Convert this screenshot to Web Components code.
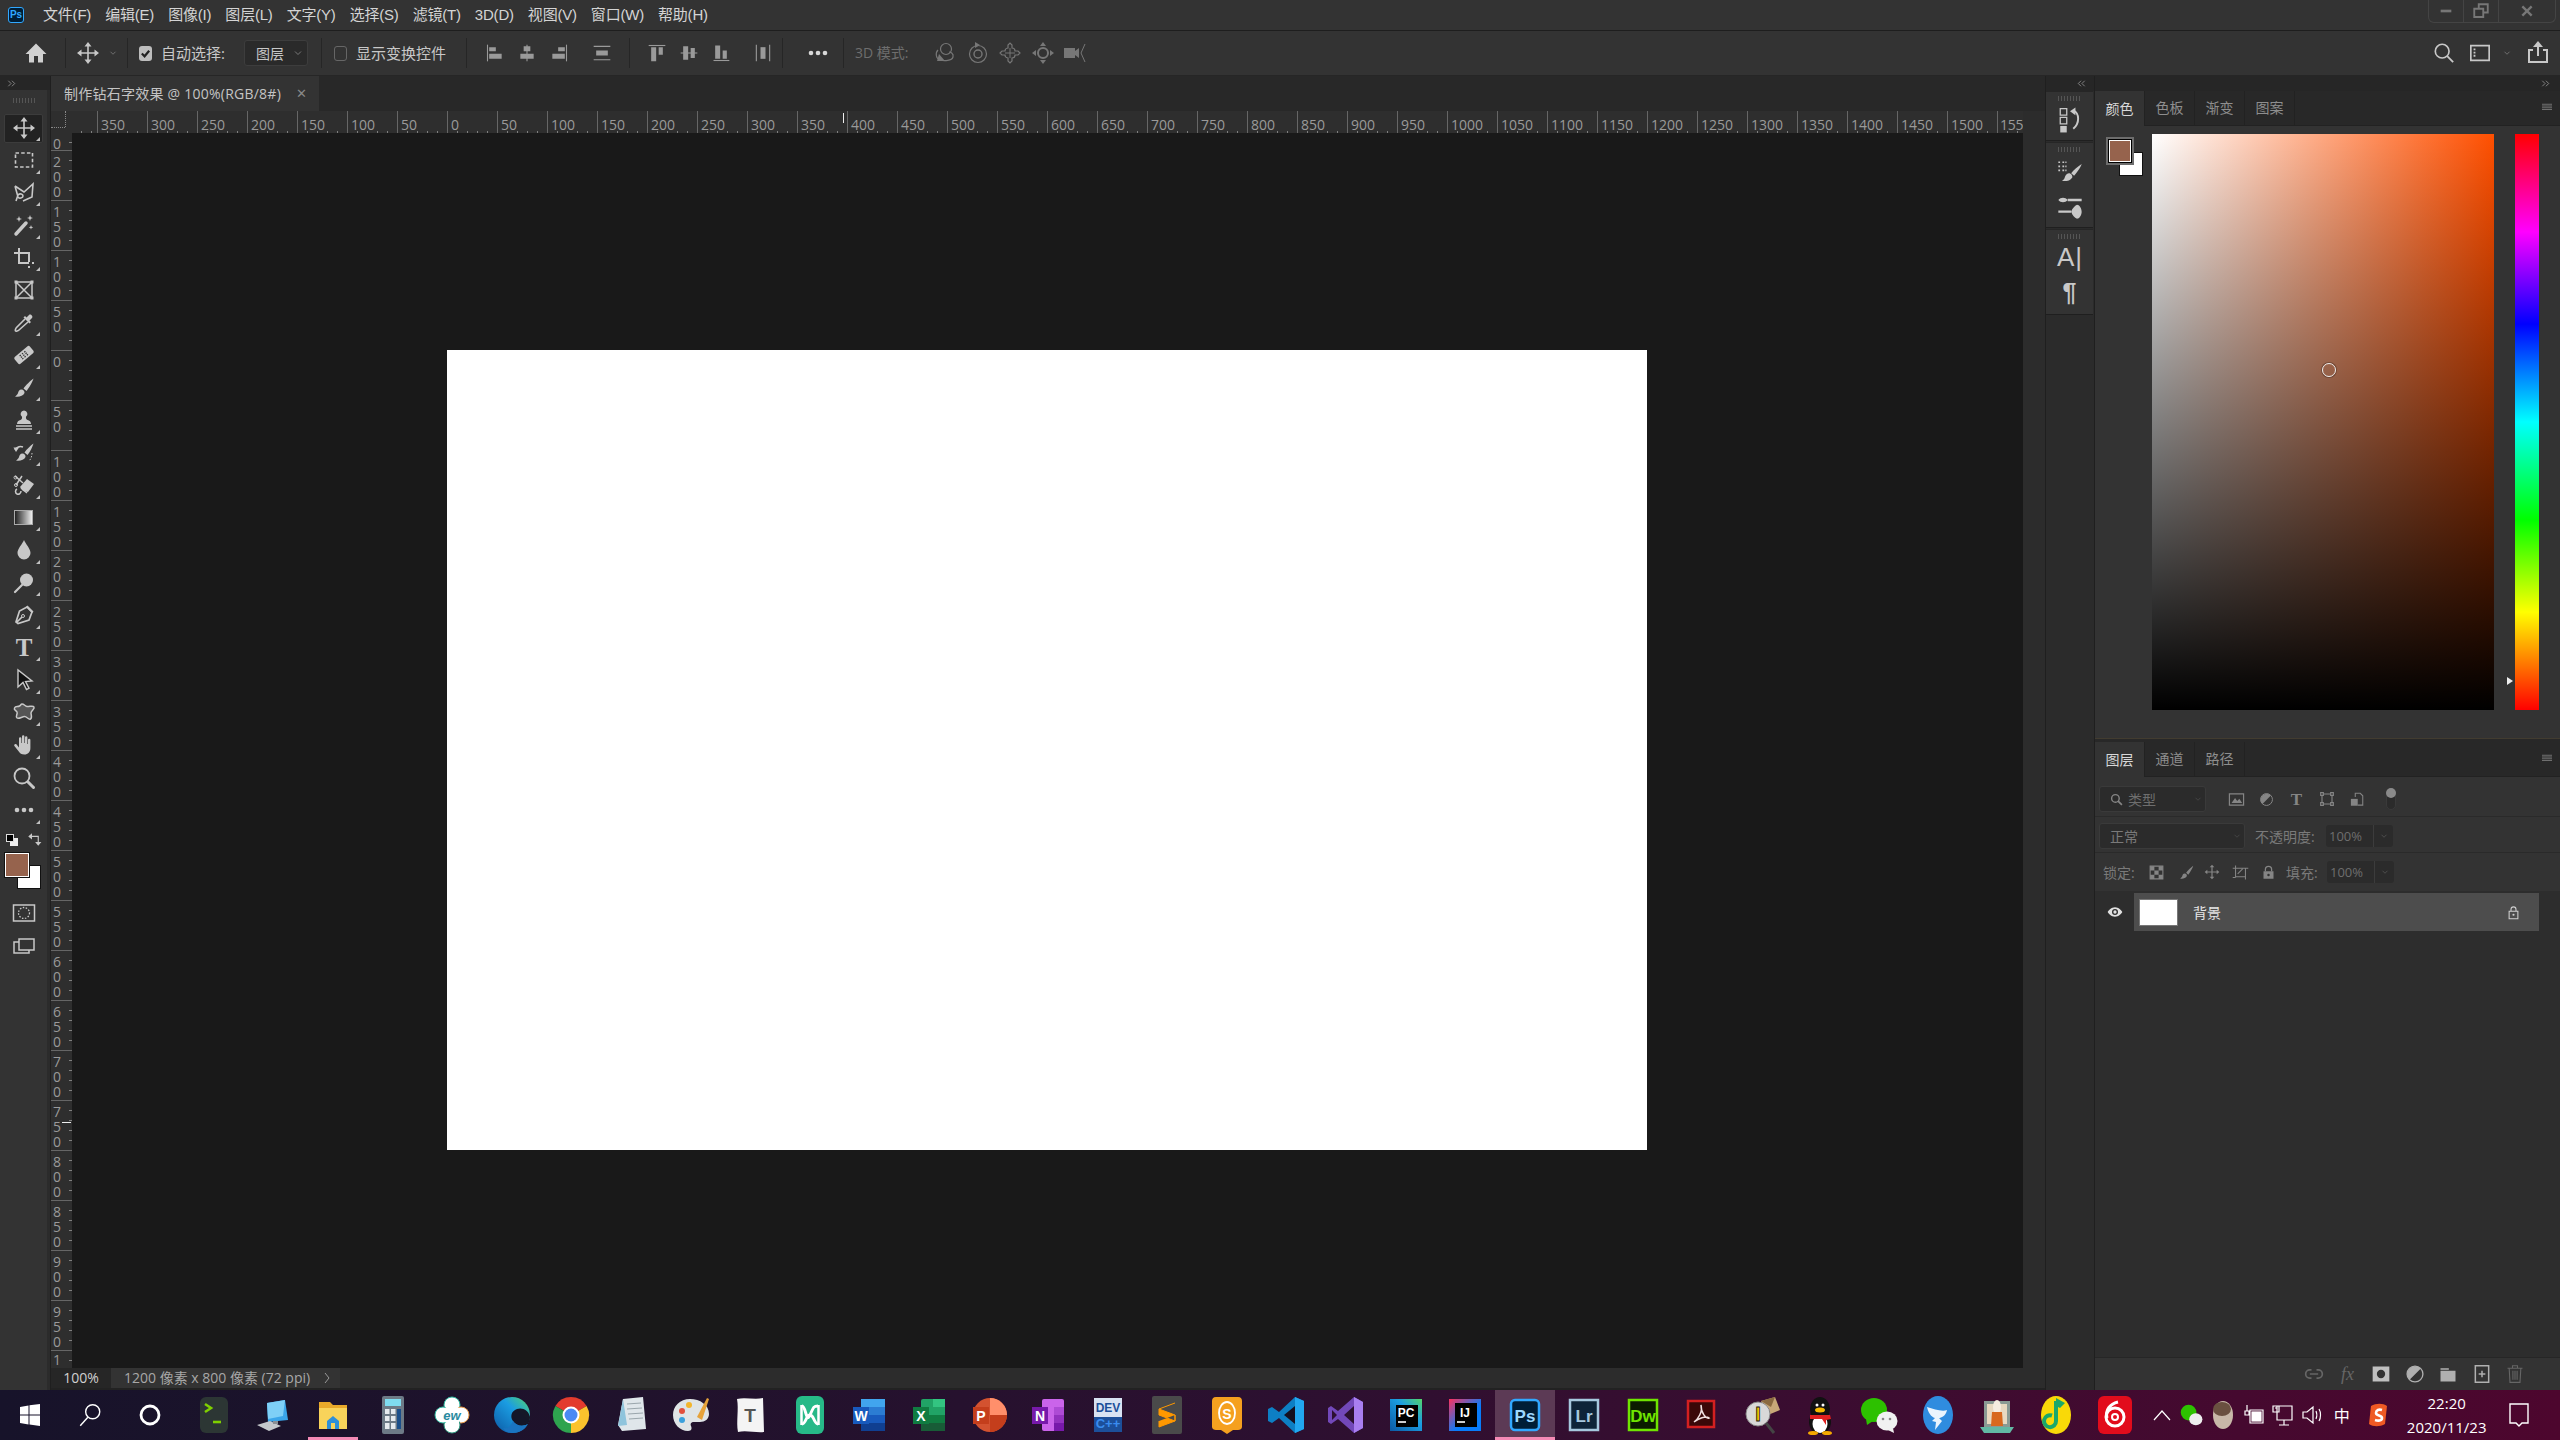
<!DOCTYPE html>
<html lang="zh-CN">
<head>
<meta charset="utf-8">
<title>Photoshop</title>
<style>
    html, body { margin: 0; padding: 0; background: #191919; }
    body { width: 2560px; height: 1440px; overflow: hidden; font-family: "Open Sans", "Noto Sans CJK SC", sans-serif; }
</style>
</head>
<body>
<ps-app></ps-app>
<script>
// icon shapes on a 24 box, drawn with currentColor
const F = 'fill="currentColor" stroke="none"';
const ICONS = {
    home: `<path ${F} d="M12 2.500 1.500 13H5v8.500h5V15h4v6.500h5V13h3.500z"/>`,
    move: `<path d="M12 4v16M4 12h16" stroke-width="1.600"/><path ${F} d="M12 1l3.500 4.500h-7zM12 23l-3.500-4.500h7zM1 12l4.500-3.500v7zM23 12l-4.500 3.500v-7z"/>`,
    marquee: `<rect x="3.500" y="5" width="17" height="14" stroke-width="1.600" stroke-dasharray="3.500 2.200"/>`,
    lasso: `<path stroke-width="1.600" d="M3 5l9 6 9-8-1 13-9 4M3 5l3 11c1 2 5 1 5-1s-3-3-5-1l-2 6"/>`,
    wand: `<path stroke-width="3.500" stroke-linecap="round" d="M4 21 14 10"/><path ${F} d="M7 3l.8 2.200L10 6l-2.200.8L7 9l-.8-2.200L4 6l2.200-.8zM18 2l.8 2.200L21 5l-2.200.8L18 8l-.8-2.200L15 5l2.200-.8zM19 12l.6 1.700 1.700.6-1.700.6-.6 1.700-.6-1.700-1.700-.6 1.700-.6z"/>`,
    crop: `<path stroke-width="2" d="M7 2v15h10M2 7h15v9M17 20v2M20 17h2"/>`,
    frame: `<path stroke-width="1.500" d="M4 4h16v16H4zM4 4l16 16M20 4 4 20"/><path ${F} d="M2.500 2.500h3v3h-3zM18.500 2.500h3v3h-3zM2.500 18.500h3v3h-3zM18.500 18.500h3v3h-3z"/>`,
    dropper: `<path stroke-width="1.600" d="M13 8 4.500 16.500c-1 1-1.500 3-1 3.500s2.500 0 3.500-1L16 11"/><path ${F} d="M11.500 6.500l6 6 1.500-1.500-1.500-1.500 2.500-2.500c1.500-1.500-1.500-4.500-3-3L14.500 6.500 13 5z"/>`,
    bandage: `<g transform="rotate(-40 12 12)"><rect ${F} x="2" y="7.500" width="20" height="9" rx="2"/><path stroke="#333" stroke-width="1.200" stroke-dasharray="1.500 1.500" d="M8 10h8M8 12h8M8 14h8"/></g>`,
    brush: `<path ${F} d="M21.500 2.500c-3 2-8 7-10 10l3 2.500c2.500-3 6-9 7-12.500zM9.500 13.500c-2.500 0-3 2-3.500 3.500-.3 1.300-1.500 2.500-3 3.500 3.500.8 8-.2 9.500-3.500.3-1.500-1-3.500-3-3.500z"/>`,
    stamp: `<path ${F} d="M12 2.500a3.500 3.500 0 0 0-2 6.300c.3 1.700-.3 2.700-1.500 3.200-2 .8-3.500 1.500-3.500 4h14c0-2.500-1.500-3.200-3.500-4-1.200-.5-1.800-1.500-1.500-3.200a3.500 3.500 0 0 0-2-6.300z"/><path stroke-width="1.600" d="M4 18h16M4 21h16"/>`,
    history: `<path ${F} d="M21.500 2.500c-3 2-7 6-9 9l3 2.500c2.500-3 5-8 6-11.500zM10.500 12.500c-2.500 0-3 2-3.500 3.500-.3 1.300-1.500 2.500-3 3.500 3.500.8 8-.2 9.500-3.500.3-1.500-1-3.500-3-3.500z"/><path stroke-width="1.500" d="M3 9c2-3 5-4 8-3"/><path ${F} d="M1.500 6.500 7 6.500 4 11z"/><path stroke-dasharray="1.500 1.500" d="M20 12c0 3-1 6-3 8"/>`,
    eraser: `<path ${F} d="M15 6l7 5-6 8-5-1-3-4z"/><path stroke-width="1.500" d="M3 3l8 7M10 3 4 12M5 16c-2 1-2 4 0 5s4-1 4-3M9 15l6 5"/><circle cx="3.500" cy="4.500" r="1.500"/><circle cx="4" cy="12" r="1.500"/>`,
    drop: `<path ${F} d="M12 2c-1.500 4-6.500 8.500-6.500 13a6.500 6.500 0 0 0 13 0c0-4.500-5-9-6.500-13z"/>`,
    dodge: `<circle ${F} cx="14.500" cy="9" r="6.500"/><path stroke-width="2.200" stroke-linecap="round" d="M10 14 3 21"/>`,
    pen: `<path stroke-width="1.700" d="M15 4 20 9 17 17 6 20.500 4 19 7.500 8zM4 20l6-6"/><circle cx="11" cy="13" r="1.500"/><path ${F} d="M15.500 2.500 21.500 8.500 20 10 14 4z"/>`,
    pathsel: `<path fill="#111" stroke-width="1.400" d="M6 2v17l5-4.500 3.500 7 2.500-1.200-3.500-6.800 6.500-.5z"/>`,
    shape: `<path fill="#555" stroke-width="1.500" d="M10 3c2 0 3 2 5 2.500s6-1.500 7 .5-3 4-3 6 1.500 5-.5 6-3.500-2.500-6-2.500-5.500 3-7.500 1.500 1-4 0-6-3.500-2-2.500-4 3-1 5-2 1-2 2.500-2z"/>`,
    hand: `<path ${F} d="M7 11V5.500a1.200 1.200 0 0 1 2.400 0V10h.6V3.500a1.200 1.200 0 0 1 2.400 0V10h.6V4.500a1.200 1.200 0 0 1 2.400 0V11h.6V7a1.200 1.200 0 0 1 2.400 0v8c0 4-2.500 6.500-6 6.500-3 0-4.500-1-6-3.500l-4-5c-1-1.500 1-2.800 2.200-1.600L7 14.500z"/>`,
    zoom: `<circle cx="10" cy="10" r="7.500" stroke-width="1.800"/><path stroke-width="3" stroke-linecap="round" d="M16 16l5.500 5.500"/>`,
    dots: `<circle ${F} cx="5" cy="12" r="2.300"/><circle ${F} cx="12" cy="12" r="2.300"/><circle ${F} cx="19" cy="12" r="2.300"/>`,
    swap: `<path stroke-width="1.800" d="M4 7h14v11"/><path ${F} d="M8 2v10L2 7zM13 16h10l-5 6z"/>`,
    mask: `<rect x="1.500" y="4" width="21" height="16" stroke-width="1.500"/><circle cx="12" cy="12" r="5.500" stroke-dasharray="1.500 1.500" stroke-width="1.300"/>`,
    screen: `<path stroke-width="1.500" d="M7 5h15v11H7zM7 8H2v11h15v-3"/>`,
    alignL: `<path stroke-width="1.300" d="M3 2v20"/><path ${F} d="M5 5h8v5H5zM5 13h15v6H5z"/>`,
    alignC: `<path stroke-width="1.300" d="M12 2v20"/><path ${F} d="M8 4h8v6H8zM4 13h16v6H4z"/>`,
    alignR: `<path stroke-width="1.300" d="M21 2v20"/><path ${F} d="M11 5h8v5h-8zM4 13h15v6H4z"/>`,
    distH: `<path stroke-width="1.300" d="M2 4h20M2 20h20"/><path ${F} d="M5 9h14v6H5z"/>`,
    alignT: `<path stroke-width="1.300" d="M2 3h20"/><path ${F} d="M5 5h6v17H5zM14 5h5v9h-5z"/>`,
    alignM: `<path stroke-width="1.300" d="M2 12h20"/><path ${F} d="M5 4h6v16H5zM14 6h5v12h-5z"/>`,
    alignB: `<path stroke-width="1.300" d="M3 21h19"/><path ${F} d="M5 3h6v16H5zM14 9h5v10h-5z"/>`,
    distV: `<path stroke-width="1.300" d="M4 2v20M20 2v20"/><path ${F} d="M9 5h6v14H9z"/>`,
    orbit: `<circle cx="13" cy="8" r="5.500" stroke-width="1.200"/><path stroke-width="1.200" d="M5 9c-3 3-2 9 2 10s12 1 13-3-3-5-4-5"/><path ${F} d="M6 13l6 7H4z"/>`,
    roll: `<circle cx="12" cy="13" r="8.500" stroke-width="1.200"/><circle cx="12" cy="13" r="4" stroke-width="1.400"/><path ${F} d="M9 1l5 3-5 3z"/>`,
    pan: `<path stroke-width="1.200" d="M10 7V4l2-2 2 2v3c3 0 3 3 3 3h3l2 2-2 2h-3s0 3-3 3v3l-2 2-2-2v-3c-3 0-3-3-3-3H4l-2-2 2-2h3s0-3 3-3z"/><path stroke-width="1" d="M12 7v10M7 12h10"/>`,
    slide: `<circle cx="12" cy="12" r="5" stroke-width="2"/><path ${F} d="M12 1l3 4H9zM12 23l-3-4h6zM1 12l4-3v6zM23 12l-4 3V9z"/>`,
    camera: `<path ${F} d="M1 7h11v10H1zM12 10l4-3v10l-4-3z"/><path stroke-width="1" d="M22 3 18 12l4 9"/>`,
    search: `<circle cx="10" cy="10" r="7.500" stroke-width="1.800"/><path stroke-width="2" d="M15.500 15.500 22 22"/>`,
    workspace: `<path stroke-width="1.800" d="M2 4h20v16H2z"/><path ${F} d="M5 7h2v2H5zM5 10.500h2v2H5zM5 14h2v2H5z"/>`,
    share: `<path stroke-width="2" d="M7 9H3v12h18V9h-4"/><path stroke-width="2" d="M12 15V3"/><path ${F} d="M12 0l5 6H7z"/>`,
    minimize: `<path ${F} d="M4 10h16v4H4z"/>`,
    restore: `<path stroke-width="2.500" d="M9 8V3h12v11h-6M3 9h12v11H3z"/>`,
    close: `<path stroke-width="3.500" d="M5 5l14 14M19 5 5 19"/>`,
    stack: `<path stroke-width="1.200" d="M3 1.500h6v6H3zM3 9.500h6v6H3z"/><path ${F} d="M3 17.500h6v6H3z"/><path stroke-width="1.800" d="M15 3c6 3 6 12 0 17"/><path ${F} d="M12 4l5-3.500v7z"/>`,
    brushlist: `<path ${F} d="M22 6c-3 2-7 5-9 8l2.500 2c2.500-2.500 5.500-7 6.500-10zM11 14c-2 0-3 2-3.500 3.500-.3 1-1 2-2.500 3 3.500.5 7 0 9-3 .3-1.500-1-3.500-3-3.500z"/><path stroke-width="1.400" stroke-dasharray="1.500 1" d="M2 4.500h2M2 8h2M2 11.500h2M5.500 4.500H9M5.500 8H9M5.500 11.500H9"/>`,
    brushset: `<path ${F} d="M2 6c2-2.500 6-2.500 8 0 -2 2.500-6 2.500-8 0zM22 16c0-3-2-6-4-6-2 1-4 3-5 6 1 3 3 5 5 6 2 0 4-3 4-6z"/><path stroke-width="2" d="M10 6h12M2 16h11"/>`,
    menu: `<path stroke-width="1.100" d="M2 6.500h20M2 10h20M2 13.500h20M2 17h20"/>`,
    mag: `<circle cx="10" cy="10" r="7" stroke-width="2.600"/><path stroke-width="3.200" d="M15 15l7 7"/>`,
    img: `<path stroke-width="1.700" d="M2 4h20v16H2z"/><path ${F} d="M5 17l5-7 3 4 3-3 4 6z"/>`,
    half: `<circle cx="12" cy="12" r="9.500" stroke-width="1.600"/><path ${F} d="M5.500 19 19 5.500A9.500 9.500 0 0 0 5.500 19z"/>`,
    xform: `<path stroke-width="1.700" d="M4.500 4.500h15v15h-15z"/><path fill="#333" stroke-width="1.700" d="M2.500 2.500h4v4h-4zM17.500 2.500h4v4h-4zM2.500 17.500h4v4h-4zM17.500 17.500h4v4h-4z"/>`,
    smart: `<path stroke-width="1.700" d="M10 8V2h8l4 4v15h-8"/><path ${F} d="M3 11h11v11H3z"/>`,
    checker: `<path stroke-width="1.500" d="M3 3h18v18H3z"/><path ${F} d="M3 3h6v6H3zM15 3h6v6h-6zM9 9h6v6H9zM3 15h6v6H3zM15 15h6v6h-6z"/>`,
    lockpos: `<path stroke-width="1.800" d="M12 4v16M4 12h16"/><path ${F} d="M12 1l3.500 4h-7zM12 23l-3.500-4h7zM1 12l4-3.500v7zM23 12l-4 3.500v-7z"/>`,
    lockart: `<path stroke-width="1.500" d="M1 6h22M5 2v17M5 18h14V6M1 19h4M19 22v-4M8 14l7-7"/>`,
    lock: `<path stroke-width="2" d="M7 10V7a5 5 0 0 1 10 0v3"/><path ${F} fill-rule="evenodd" d="M4 10h16v12H4zM12 14a2 2 0 1 0 0 4 2 2 0 0 0 0-4z"/>`,
    lockline: `<path stroke-width="1.700" d="M8 10V7a4 4 0 0 1 8 0v3M5 10h14v12H5z"/><circle ${F} cx="12" cy="15.500" r="1.700"/>`,
    eye: `<path ${F} fill-rule="evenodd" d="M12 5C6.500 5 2.500 9.500 1 12c1.500 2.500 5.500 7 11 7s9.500-4.500 11-7c-1.500-2.500-5.500-7-11-7zm0 2.500a4.500 4.500 0 1 1 0 9 4.500 4.500 0 0 1 0-9z"/><circle ${F} cx="12" cy="12" r="2.500"/>`,
    link: `<path stroke-width="2" d="M9 7H7a5 5 0 0 0 0 10h2M15 7h2a5 5 0 0 1 0 10h-2M7 12h10"/>`,
    addmask: `<path ${F} fill-rule="evenodd" d="M2 3h20v18H2zM12 7a5 5 0 1 0 0 10 5 5 0 0 0 0-10z"/>`,
    folder: `<path ${F} d="M3 5h10v2H3zM3 8h18v13H3z"/>`,
    newlayer: `<path stroke-width="1.800" d="M4 2h16v20H4z"/><path stroke-width="1.800" d="M12 8v8M8 12h8"/>`,
    trash: `<path stroke-width="1.300" d="M3 5h18M9 5V2h6v3M5 5l1 17h12l1-17M9.500 8v11M12 8v11M14.500 8v11"/>`,
    chevron: `<path stroke-width="1.400" d="M6 9l6 6 6-6"/>`,
    chevL: `<path stroke-width="1.500" d="M11 6l-6 6 6 6M19 6l-6 6 6 6"/>`,
    chevR: `<path stroke-width="1.500" d="M5 6l6 6-6 6M13 6l6 6-6 6"/>`,
};

// shared helper for <ps-icon name size color>
class PsIcon extends HTMLElement {
    connectedCallback() {
        const size = this.getAttribute("size") || "22";
        const color = this.getAttribute("color") || "#c8c8c8";
        const root = this.shadowRoot || this.attachShadow({ mode: "open" });
        root.innerHTML = `
            <style>
                :host { display: inline-flex; align-items: center; justify-content: center; width: ${size}px; height: ${size}px; color: ${color}; flex: none; }
                svg { display: block; width: 100%; height: 100%; fill: none; stroke: currentColor; }
            </style>
            <svg viewBox="0 0 24 24">${ICONS[this.getAttribute("name")] || ""}</svg>`;
    }
}

class PsMenubar extends HTMLElement {
    constructor() {
        super();
        this.attachShadow({ mode: "open" });
        const items = ["文件(F)", "编辑(E)", "图像(I)", "图层(L)", "文字(Y)", "选择(S)", "滤镜(T)", "3D(D)", "视图(V)", "窗口(W)", "帮助(H)"];
        this.shadowRoot.innerHTML = `
            <style>
                :host { display: flex; align-items: center; height: 31px; background: #333; border-bottom: 1px solid #1e1e1e; color: #d4d4d4; font-size: 15px; box-sizing: border-box; }
                .logo { width: 16px; height: 16px; margin: 0 19px 0 8px; border: 1.500px solid #31a8ff; border-radius: 3px; background: #001e36; box-sizing: border-box; color: #31a8ff; font: 700 10px/13px "Liberation Sans", sans-serif; text-align: center; }
                nav { display: flex; align-items: baseline; gap: 14px; padding-bottom: 3px; font-family: "Liberation Sans", "Noto Sans CJK SC", sans-serif; letter-spacing: -.2px; }
                .win { margin-left: auto; margin-right: 4px; width: 128px; height: 23px; align-self: flex-start; display: flex; border: 1px solid #444; border-top: 0; border-radius: 0 0 6px 6px; box-sizing: border-box; }
                .win div { display: flex; align-items: center; justify-content: center; border-right: 1px solid #444; }
                .win div:last-child { border: 0; }
            </style>
            <div class="logo">Ps</div>
            <nav>${items.map((t) => `<span>${t}</span>`).join("")}</nav>
            <div class="win">
                <div style="width:34px"><ps-icon name="minimize" size="16" color="#777"></ps-icon></div>
                <div style="width:34px"><ps-icon name="restore" size="18" color="#777"></ps-icon></div>
                <div style="flex:1"><ps-icon name="close" size="16" color="#777"></ps-icon></div>
            </div>`;
    }
}

class PsOptions extends HTMLElement {
    constructor() {
        super();
        this.attachShadow({ mode: "open" });
        const cell = (name, ml = 0, color = "#9a9a9a") => `<div class="cell" style="margin-left:${ml}px"><ps-icon name="${name}" size="20" color="${color}"></ps-icon></div>`;
        const dim = (name) => `<div class="cell3d"><ps-icon name="${name}" size="24" color="#777"></ps-icon></div>`;
        this.shadowRoot.innerHTML = `
            <style>
                :host { display: flex; align-items: center; height: 45px; background: #333; border-bottom: 1px solid #262626; color: #c8c8c8; font-size: 15px; box-sizing: border-box; }
                .sec { display: flex; align-items: center; height: 30px; border-right: 1px solid #262626; flex: none; box-sizing: border-box; }
                span { position: relative; top: -1px; }
                .cell { width: 32px; display: flex; justify-content: center; flex: none; }
                .cell3d { width: 32.500px; display: flex; justify-content: center; flex: none; }
                .check { width: 13px; height: 15px; border-radius: 3px; background: #bdbdbd; display: flex; align-items: center; justify-content: center; }
                .uncheck { width: 13px; height: 15px; border-radius: 3px; border: 1px solid #666; box-sizing: border-box; }
                .drop { width: 64px; height: 26px; margin-left: 19px; background: #2a2a2a; border: 1px solid #3d3d3d; border-radius: 3px; box-sizing: border-box; display: flex; align-items: center; padding-left: 11px; font-size: 14px; justify-content: space-between; padding-right: 3px; }
                .right { margin-left: auto; display: flex; align-items: center; }
            </style>
            <div class="sec" style="width:66px;padding-left:24px"><ps-icon name="home" size="24" color="#d0d0d0"></ps-icon></div>
            <div class="sec" style="width:62px;padding-left:10px"><ps-icon name="move" size="24"></ps-icon><ps-icon name="chevron" size="10" color="#999" style="margin-left:8px"></ps-icon></div>
            <div class="sec" style="width:194px;padding-left:11px">
                <div class="check"><svg width="11" height="11" viewBox="0 0 12 12"><path d="M2 6l3 3 5-6" fill="none" stroke="#222" stroke-width="2.400"/></svg></div>
                <span style="margin-left:9px">自动选择:</span>
                <div class="drop">图层<ps-icon name="chevron" size="12" color="#999"></ps-icon></div>
            </div>
            <div class="sec" style="width:145px;padding-left:12px"><div class="uncheck"></div><span style="margin-left:9px">显示变换控件</span></div>
            <div class="sec" style="width:163px;padding-left:12px">${cell("alignL")}${cell("alignC")}${cell("alignR")}${cell("distH", 11)}</div>
            <div class="sec" style="width:153px;padding-left:11px">${cell("alignT")}${cell("alignM")}${cell("alignB")}${cell("distV", 10)}</div>
            <div class="sec" style="width:61px;padding-left:23px"><ps-icon name="dots" size="24" color="#d8d8d8"></ps-icon></div>
            <span style="margin-left:11px;color:#6e6e6e;font-size:14px;width:74px;flex:none">3D 模式:</span>
            ${dim("orbit")}${dim("roll")}${dim("pan")}${dim("slide")}${dim("camera")}
            <div class="right">
                <ps-icon name="search" size="22" style="margin-right:1px;position:relative;left:1px"></ps-icon>
                <ps-icon name="workspace" size="22" style="margin-left:14px"></ps-icon>
                <ps-icon name="chevron" size="10" color="#999" style="margin-left:11px"></ps-icon>
                <ps-icon name="share" size="24" style="margin:0 10px 0 14px"></ps-icon>
            </div>`;
    }
}

class PsToolbar extends HTMLElement {
    constructor() {
        super();
        this.attachShadow({ mode: "open" });
        const tools = ["move", "marquee", "lasso", "wand", "crop", "frame", "dropper", "bandage", "brush", "stamp", "history", "eraser", "gradient", "drop", "dodge", "pen", "type", "pathsel", "shape", "hand", "zoom", "dots"];
        const noFly = ["frame", "zoom"];
        const row = (t, i) => {
            let icon = `<ps-icon name="${t}" size="24"></ps-icon>`;
            if (t === "gradient") icon = `<div class="grad"></div>`;
            if (t === "type") icon = `<svg width="24" height="24" viewBox="0 0 24 24" style="overflow:visible"><text x="12" y="20" text-anchor="middle" font-family="Liberation Serif, serif" font-size="25" font-weight="700" fill="#c8c8c8">T</text></svg>`;
            return `<div class="tool ${i === 0 ? "on" : ""} ${noFly.includes(t) ? "" : "more"}">${icon}</div>`;
        };
        this.shadowRoot.innerHTML = `
            <style>
                :host { display: block; width: 51px; flex: none; background: #333; border-right: 1px solid #1f1f1f; box-shadow: inset -3px 0 0 #2b2b2b; box-sizing: border-box; }
                .top { height: 14px; background: #262626; color: #aaa; padding-left: 6px; display: flex; align-items: center; }
                .grip { height: 21.500px; display: flex; align-items: center; justify-content: center; }
                .grip i { display: block; width: 24px; height: 5px; background: repeating-linear-gradient(90deg, #555 0 1px, transparent 1px 3px); }
                .tool { position: relative; width: 39px; height: 32.500px; margin-left: 4px; display: flex; align-items: center; justify-content: center; box-sizing: border-box; }
                .tool.on::before { content: ""; position: absolute; left: 0; right: 0; top: 2px; bottom: 1.500px; background: #222; border: 1px solid #3c3c3c; border-radius: 2px; }
                .tool > * { position: relative; }
                .tool.more::after { content: ""; position: absolute; right: 3px; bottom: 3px; border-left: 4px solid transparent; border-bottom: 4px solid #c0c0c0; }
                .grad { width: 19px; height: 15px; background: linear-gradient(90deg, #222, #eee); border: 1px solid #aaa; box-sizing: border-box; }
                .swap { height: 26.500px; display: flex; align-items: center; margin-left: 6px; gap: 9px; }
                .mini { position: relative; width: 12px; height: 12px; }
                .mini i { position: absolute; width: 8px; height: 8px; }
                .swatches { position: relative; height: 43px; }
                .swatches i { position: absolute; display: block; box-sizing: border-box; border: 1px solid #111; }
                .extra { height: 33px; display: flex; align-items: center; justify-content: center; width: 39px; margin-left: 4px; position: relative; }
            </style>
            <div class="top"><ps-icon name="chevR" size="11" color="#aaa"></ps-icon></div>
            <div class="grip"><i></i></div>
            ${tools.map(row).join("")}
            <div class="swap">
                <div class="mini"><i style="left:4px;top:4px;background:#eee;width:8px;height:8px"></i><i style="left:0;top:0;background:#000;border:1px solid #ddd;box-sizing:border-box"></i></div>
                <ps-icon name="swap" size="15"></ps-icon>
            </div>
            <div class="swatches">
                <i style="left:17px;top:12px;width:24px;height:24px;background:#fff"></i>
                <i style="left:5px;top:0;width:24px;height:24px;background:#96634d;border:1px solid #fff;outline:1px solid #111"></i>
            </div>
            <div class="extra"><ps-icon name="mask" size="24"></ps-icon></div>
            <div class="extra"><ps-icon name="screen" size="24"></ps-icon></div>`;
    }
}

// the first and last cells are cut by the window, so they only carry what shows
class PsRuler extends HTMLElement {
    constructor() {
        super();
        this.attachShadow({ mode: "open" });
        const vertical = this.getAttribute("dir") === "v";
        const from = Number(this.getAttribute("from"));
        const count = Number(this.getAttribute("count"));
        const cells = [];
        for (let i = 0; i < count; i++) {
            const label = String(Math.abs(from + i * 50));
            if (vertical) {
                let digits = label.split("");
                let style = "";
                if (i === 0) {
                    digits = digits.slice(-1);
                    style = "height:17px;border-top:0";
                }
                if (i === count - 1) {
                    digits = digits.slice(0, 1);
                    style = "height:18px;padding-top:1px";
                }
                cells.push(`<div class="cell" style="${style}">${digits.map((d) => `<b>${d}</b>`).join("")}</div>`);
            } else if (i === 0) {
                cells.push(`<div class="cell" style="width:25px;border-left:0"></div>`);
            } else if (i === count - 1) {
                cells.push(`<div class="cell" style="width:26px;padding-left:2px;letter-spacing:-.3px">${label.slice(0, -1)}</div>`);
            } else {
                cells.push(`<div class="cell">${label}</div>`);
            }
        }
        this.shadowRoot.innerHTML = `
            <style>
                :host { display: block; overflow: hidden; background: #2e2e2e; color: #9a9a9a; font-size: 14px; position: relative; }
                .track { display: flex; flex-direction: ${vertical ? "column" : "row"}; }
                .cell { flex: none; box-sizing: border-box; }
                .h { height: 22px; }
                .h .cell { width: 50px; height: 22px; padding: 6px 0 0 3px; line-height: 16px; border-left: 1px solid #666; background: repeating-linear-gradient(90deg, transparent 0 9px, #808080 9px 10px) left bottom / 100% 2px no-repeat; }
                .v .cell { height: 50px; width: 21px; border-top: 1px solid #666; padding: 3px 0 0 2px; display: flex; flex-direction: column; background: repeating-linear-gradient(180deg, transparent 0 9px, #808080 9px 10px) right top / 3px 100% no-repeat; }
                .v b { display: block; font-weight: 400; line-height: 15px; height: 15px; }
            </style>
            <div class="track ${vertical ? "v" : "h"}">${cells.join("")}</div><slot></slot>`;
    }
}

class PsDocument extends HTMLElement {
    constructor() {
        super();
        this.attachShadow({ mode: "open" });
        this.shadowRoot.innerHTML = `
            <style>
                :host { display: flex; flex-direction: column; width: 1972px; flex: none; background: #282828; color: #c8c8c8; font-size: 14px; }
                .tabs { height: 35px; display: flex; background: #282828; flex: none; }
                .tab { width: 268px; height: 35px; background: #333; display: flex; align-items: center; padding: 0 0 2px 13px; box-sizing: border-box; color: #c4c4c4; letter-spacing: .24px; }
                .tab .x { margin-left: 15px; color: #888; font-size: 13px; }
                .rtop { display: flex; height: 22px; flex: none; }
                .corner { width: 21px; flex: none; background: #2e2e2e; position: relative; }
                .corner::before { content: ""; position: absolute; left: 14px; top: 0; height: 16px; border-left: 1px dotted #888; }
                .corner::after { content: ""; position: absolute; left: 0; top: 16px; width: 14px; border-top: 1px dotted #888; }
                ps-ruler.h { flex: 1; min-width: 0; }
                .mid { flex: 1; display: flex; min-height: 0; }
                ps-ruler.v { width: 21px; flex: none; }
                .canvas { flex: 1; background: #191919; padding: 217px 0 0 375px; box-sizing: border-box; }
                .sheet { width: 1200px; height: 800px; background: #fff; }
                .status { height: 22px; flex: none; display: flex; background: #2c2c2c; box-shadow: inset 0 -2px 0 #222; }
                .zoom { width: 60px; text-align: center; line-height: 20px; background: #262626; color: #d0d0d0; height: 20px; }
                .info { width: 229px; height: 20px; background: #333; display: flex; line-height: 20px; padding-left: 13px; box-sizing: border-box; color: #a8a8a8; }
                .info span { flex: 1; }
                .mark { position: absolute; background: #eee; }
            </style>
            <div class="tabs"><div class="tab">制作钻石字效果 @ 100%(RGB/8#)<span class="x">✕</span></div></div>
            <div class="rtop"><div class="corner"></div>
                <ps-ruler class="h" from="-400" count="40"><div class="mark" style="left:771px;top:2px;width:1px;height:10px"></div></ps-ruler>
            </div>
            <div class="mid">
                <ps-ruler class="v" dir="v" from="-250" count="26"><div class="mark" style="left:11px;top:989px;width:9px;height:1px"></div></ps-ruler>
                <div class="canvas"><div class="sheet"></div></div>
            </div>
            <div class="status"><div class="zoom">100%</div><div class="info"><span>1200 像素 x 800 像素 (72 ppi)</span><svg width="10" height="20" viewBox="0 0 10 20" style="margin-right:8px"><path d="M3 5l4 5-4 5" fill="none" stroke="#999"/></svg></div></div>`;
    }
}

class PsScroll extends HTMLElement {
    constructor() {
        super();
        this.attachShadow({ mode: "open" });
        this.shadowRoot.innerHTML = `<style>:host { display: block; width: 22px; flex: none; background: #2c2c2c; box-shadow: inset 0 35px 0 #282828, inset 0 -2px 0 #222; }</style>`;
    }
}

class PsDock extends HTMLElement {
    constructor() {
        super();
        this.attachShadow({ mode: "open" });
        const txt = (t, font) => `<div class="item" style="margin-top:-1px"><span style="font:${font};color:#c8c8c8">${t}</span></div>`;
        this.shadowRoot.innerHTML = `
            <style>
                :host { display: block; width: 50px; flex: none; background: #2b2b2b; border-left: 1px solid #1f1f1f; border-right: 1px solid #1f1f1f; box-sizing: border-box; }
                .top { height: 15px; background: #262626; display: flex; align-items: center; justify-content: flex-end; padding-right: 7px; }
                .group { background: #333; margin: 0 1px 1px 0; border-bottom: 1px solid #1f1f1f; border-top: 1px solid #262626; box-sizing: border-box; }
                .grip { height: 9px; margin-bottom: 1px; display: flex; align-items: flex-end; justify-content: center; }
                .grip i { display: block; width: 24px; height: 5px; background: repeating-linear-gradient(90deg, #555 0 1px, transparent 1px 3px); }
                .item { height: 36px; display: flex; align-items: center; justify-content: center; }
            </style>
            <div class="top"><ps-icon name="chevL" size="11" color="#aaa"></ps-icon></div>
            <div class="group" style="height:50px"><div class="grip"><i></i></div><div class="item"><ps-icon name="stack" size="26"></ps-icon></div></div>
            <div class="group" style="height:86px"><div class="grip"><i></i></div><div class="item"><ps-icon name="brushlist" size="28"></ps-icon></div><div class="item"><ps-icon name="brushset" size="28"></ps-icon></div></div>
            <div class="group" style="height:86px"><div class="grip"><i></i></div>
                ${txt("A<span style='font-weight:400;margin-left:1px'>|</span>", "400 26px/30px 'Liberation Sans', sans-serif")}
                ${txt("¶", "700 25px/30px 'Liberation Sans', sans-serif")}
            </div>`;
    }
}

class PsPanelTabs extends HTMLElement {
    constructor() {
        super();
        this.attachShadow({ mode: "open" });
        const labels = this.getAttribute("labels").split(",");
        this.shadowRoot.innerHTML = `
            <style>
                :host { display: flex; height: 35px; flex: none; background: #282828; font-size: 14px; color: #8e8e8e; align-items: stretch; }
                div { width: 50px; display: flex; align-items: center; justify-content: center; border-right: 1px solid #222; box-sizing: border-box; border-bottom: 1px solid #222; padding-bottom: 2px; }
                div.on { background: #333; color: #d8d8d8; border-bottom: 0; }
                .fill { flex: 1; border-right: 0; justify-content: flex-end; padding-right: 7px; }
            </style>
            ${labels.map((t, i) => `<div class="${i === 0 ? "on" : ""}">${t}</div>`).join("")}
            <div class="fill"><ps-icon name="menu" size="12" color="#aaa"></ps-icon></div>`;
    }
}

class PsColorPanel extends HTMLElement {
    constructor() {
        super();
        this.attachShadow({ mode: "open" });
        this.shadowRoot.innerHTML = `
            <style>
                :host { display: flex; flex-direction: column; height: 648px; flex: none; background: #333; border-bottom: 1px solid #423c30; box-sizing: border-box; }
                .body { flex: 1; display: flex; padding: 8px 0 0 11px; }
                .swatch { position: relative; width: 46px; flex: none; }
                .swatch i { position: absolute; display: block; box-sizing: border-box; }
                .field { position: relative; width: 342px; height: 576px; flex: none; background: linear-gradient(to bottom, transparent, #000), linear-gradient(to right, #fff, #ff4f00); }
                .pick { position: absolute; left: 170px; top: 229px; width: 14px; height: 14px; border: 1px solid #eee; border-radius: 50%; box-shadow: 0 0 0 1px rgba(0,0,0,.25); box-sizing: border-box; }
                .hue { position: relative; width: 24px; height: 576px; margin-left: 21px; flex: none; background: linear-gradient(to bottom, #f00, #f0f 17%, #00f 33%, #0ff 50%, #0f0 67%, #ff0 83%, #f00); }
                .arrow { position: absolute; left: -8px; top: 543px; border-left: 6px solid #eee; border-top: 4px solid transparent; border-bottom: 4px solid transparent; }
            </style>
            <ps-panel-tabs labels="颜色,色板,渐变,图案"></ps-panel-tabs>
            <div class="body">
                <div class="swatch">
                    <i style="left:13px;top:18px;width:24px;height:24px;background:#fff;border:1px solid #111"></i>
                    <i style="left:0;top:3px;width:28px;height:28px;background:#96634d;border:2px solid #6d6d6d;box-shadow:inset 0 0 0 1px #000, inset 0 0 0 2px #fff"></i>
                </div>
                <div class="field"><div class="pick"></div></div>
                <div class="hue"><div class="arrow"></div></div>
            </div>`;
    }
}

class PsLayersPanel extends HTMLElement {
    constructor() {
        super();
        this.attachShadow({ mode: "open" });
        const ic = (name, w, ml, color = "#858585") => `<ps-icon name="${name}" size="${w}" color="${color}" style="margin-left:${ml}px"></ps-icon>`;
        const num = `<div class="num"><span>100%</span><em><ps-icon name="chevron" size="10" color="#666"></ps-icon></em></div>`;
        this.shadowRoot.innerHTML = `
            <style>
                :host { display: flex; flex-direction: column; flex: 1; min-height: 0; background: #2d2d2d; color: #7a7a7a; font-size: 14px; margin-top: 3px; }
                .row { display: flex; align-items: center; flex: none; background: #333; border-bottom: 1px solid #2a2a2a; box-sizing: border-box; }
                .dd { background: #2b2b2b; border: 1px solid #3a3a3a; border-radius: 3px; height: 26px; box-sizing: border-box; display: flex; align-items: center; justify-content: space-between; padding: 0 2px 0 10px; flex: none; }
                .num { display: flex; width: 67px; height: 22px; margin-left: 6px; background: #2b2b2b; border-radius: 3px; font-size: 13px; line-height: 22px; flex: none; color: #6e6e6e; }
                .num span { width: 48px; padding-left: 3px; box-sizing: border-box; border-right: 1px solid #3c3c3c; }
                .num em { flex: 1; display: flex; align-items: center; justify-content: center; }
                .toggle { width: 10px; height: 21px; margin-left: 22px; border-radius: 6px; background: #2b2b2b; position: relative; border: 1px solid #3a3a3a; box-sizing: border-box; }
                .toggle::before { content: ""; position: absolute; left: -1px; top: -2px; width: 10px; height: 10px; border-radius: 50%; background: #8a8a8a; }
                .layer { height: 38px; display: flex; align-items: center; background: #2d2d2d; margin-top: 2px; flex: none; }
                .eye { width: 39px; flex: none; display: flex; justify-content: center; }
                .sel { width: 405px; height: 38px; background: #4d4d4d; display: flex; align-items: center; color: #e6e6e6; }
                .thumb { width: 39px; height: 27px; margin-left: 5px; background: #fff; border: 1px solid #777; box-sizing: border-box; }
                .list { flex: 1; }
                .foot { height: 33px; flex: none; background: #333; border-top: 1px solid #262626; box-sizing: border-box; display: flex; align-items: center; padding-left: 209px; gap: 0; }
                .foot > * { margin-right: 13.500px; }
                .fx { width: 20px; font: italic 18px "Liberation Serif", serif; color: #666; text-align: center; }
            </style>
            <ps-panel-tabs labels="图层,通道,路径"></ps-panel-tabs>
            <div class="row" style="height:40px;padding:5px 0 0 4px">
                <div class="dd" style="width:107px;color:#6e6e6e"><span style="display:flex;align-items:center;gap:5px"><ps-icon name="mag" size="13" color="#858585" style="margin-left:0"></ps-icon>类型</span><ps-icon name="chevron" size="10" color="#555"></ps-icon></div>
                ${ic("img", 17, 22)}${ic("half", 15, 14)}
                <svg width="15" height="15" viewBox="0 0 15 15" style="margin-left:15px;overflow:visible"><text x="7.500" y="13" text-anchor="middle" font-family="Liberation Serif, serif" font-weight="700" font-size="17" fill="#858585">T</text></svg>
                ${ic("xform", 16, 15)}${ic("smart", 15, 14)}
                <div class="toggle"></div>
            </div>
            <div class="row" style="height:36px;padding:2px 0 0 4px">
                <div class="dd" style="width:146px;font-size:14px;color:#7a7a7a">正常<ps-icon name="chevron" size="10" color="#555"></ps-icon></div>
                <span style="margin-left:10px;width:65px;flex:none">不透明度:</span>
                ${num}
            </div>
            <div class="row" style="height:38px;padding-left:8px;border-bottom:0">
                <span style="width:37px;flex:none">锁定:</span>
                ${ic("checker", 17, 8)}${ic("brush", 17, 13)}${ic("lockpos", 16, 9)}${ic("lockart", 17, 12)}${ic("lock", 15, 12)}
                <span style="margin-left:10px;width:35px;flex:none">填充:</span>
                ${num}
            </div>
            <div class="layer">
                <div class="eye"><ps-icon name="eye" size="16" color="#e0e0e0"></ps-icon></div>
                <div class="sel"><div class="thumb"></div><span style="margin-left:15px">背景</span>
                    <ps-icon name="lockline" size="15" color="#d0d0d0" style="margin-left:auto;margin-right:18px"></ps-icon>
                </div>
            </div>
            <div class="list"></div>
            <div class="foot">
                <ps-icon name="link" size="20" color="#666"></ps-icon>
                <div class="fx">fx</div>
                <ps-icon name="addmask" size="20" color="#c0c0c0"></ps-icon>
                <ps-icon name="half" size="20" color="#b0b0b0"></ps-icon>
                <ps-icon name="folder" size="20" color="#b0b0b0"></ps-icon>
                <ps-icon name="newlayer" size="20" color="#b0b0b0"></ps-icon>
                <ps-icon name="trash" size="20" color="#666"></ps-icon>
            </div>`;
    }
}

// taskbar logos on a 40 box
const T = (x, y, s, fill, extra = "") => `<text x="${x}" y="${y}" text-anchor="middle" font-family="Liberation Sans, sans-serif" font-weight="700" font-size="${s}" fill="${fill}" ${extra}>`;
const APPS = [
    `<rect x="6" y="2" width="28" height="36" rx="6" fill="#2c3634"/><path d="M11 9l6 4-6 4" fill="none" stroke="#7fd000" stroke-width="2.600"/><path d="M19 27h8" stroke="#7fd000" stroke-width="2.600"/>`,
    `<path d="M14 8l18-3 3 20-20 2z" fill="#3aa6ea"/><path d="M14 8l18-3-2 16-15 3z" fill="#7ed0f7"/><path d="M4 30l13-4 11 5-12 5z" fill="#c4c8cc"/><path d="M20 26h5v3h-5z" fill="#8a8f94"/>`,
    `<path d="M6 7h11l3 3h14v24H6z" fill="#e8a92a"/><path d="M6 13h28v21H6z" fill="#f8d35a"/><path d="M14 26l6-5 6 5v8H14z" fill="#2e8fd8"/><path d="M18 28h4v6h-4z" fill="#f8d35a"/>`,
    `<rect x="9" y="1" width="22" height="38" rx="2" fill="#6d7a86"/><rect x="12" y="4" width="16" height="7" fill="#7fdcf0"/><path d="M12 14h4.500v5H12zM18 14h4.500v5H18zM12 21h4.500v5H12zM18 21h4.500v5H18zM12 28h4.500v6H12zM18 28h4.500v6H18z" fill="#e6eaee"/><path d="M24 14h4v20h-4z" fill="#1c4f8a"/>`,
    `<g fill="#fff" stroke="#2fb8a0" stroke-width="1"><circle cx="20" cy="10" r="8"/><circle cx="29" cy="20" r="8" stroke="#e89a48"/><circle cx="20" cy="30" r="8" stroke="#2f9a80"/><circle cx="11" cy="20" r="8"/></g><circle cx="20" cy="20" r="10" fill="#fff"/>${T(20, 25, 13, "#2a8aa0", 'font-style="italic" font-weight="400"')}ew</text>`,
    `<defs><linearGradient id="g" x1="0" y1="1" x2="1" y2="0"><stop offset="0" stop-color="#0c59a4"/><stop offset=".6" stop-color="#1b9de2"/><stop offset="1" stop-color="#54d66a"/></linearGradient></defs><circle cx="20" cy="20" r="18" fill="url(#g)"/><path d="M38 22c-1-7-8-10-13-8-6 2-7 8-4 12 3 5 10 6 15 3 1-2 2-4 2-7z" fill="#14101f" opacity=".95"/><path d="M21 26c3 5 10 6 15 3-3 6-9 9-16 9-4 0-7-2-9-5 3 1 7 0 10-7z" fill="#1a74c0"/>`,
    `<path d="M20 20 4.400 11A18 18 0 0 1 35.600 11z" fill="#e33b2e"/><path d="M20 20 35.600 11A18 18 0 0 1 20 38z" fill="#fbc32d"/><path d="M20 20 20 38A18 18 0 0 1 4.400 11z" fill="#2ea44f"/><circle cx="20" cy="20" r="8.500" fill="#fff"/><circle cx="20" cy="20" r="6.500" fill="#4a8af4"/>`,
    `<path d="M12 4l20-2 3 32-24 2-4-6z" fill="#dfe6ea"/><path d="M12 4l4 26-9 1z" fill="#8fc4dc"/><path d="M16 9l14-1M16 14l15-1M17 19l15-1M18 24l14-1" stroke="#9aa6ac" stroke-width="1"/>`,
    `<path d="M19 4C9 4 2 11 2 20c0 9 7 16 15 16 4 0 4-3 3-5s0-4 3-4h6c5 0 9-3 9-8C38 10 29 4 19 4z" fill="#dfe4e6"/><circle cx="11" cy="16" r="3" fill="#e24f3c"/><circle cx="18" cy="10" r="3" fill="#f3b52c"/><circle cx="11" cy="25" r="3" fill="#3aa0dc"/><path d="M26 22 36 3l2 1-7 21z" fill="#e6a23a"/>`,
    `<path d="M7 4c8-2 18 1 26-1l1 34c-8 1-18-2-26 0-2-10 1-23-1-33z" fill="#f4f4f4"/>${T(20, 27, 19, "#555", 'font-weight="400"')}T</text>`,
    `<rect x="6" y="1" width="28" height="38" rx="6" fill="#27b988"/><path d="M12 11c4 0 4 18 8 9s4-9 8-9M12 29c4 0 4-9 8-9s4 9 8 9" fill="none" stroke="#fff" stroke-width="3"/><path d="M11.500 10v20M28.500 10v20" stroke="#fff" stroke-width="2.500"/>`,
    `<rect x="12" y="4" width="24" height="32" rx="2" fill="#2b7cd3"/><path d="M12 4h24v8H12z" fill="#41a5ee"/><path d="M12 20h24v8H12z" fill="#185abd"/><path d="M12 28h24v8H12z" fill="#103f91"/><rect x="4" y="12" width="16" height="17" fill="#185abd"/>${T(12, 26, 14, "#fff")}W</text>`,
    `<rect x="12" y="4" width="24" height="32" rx="2" fill="#21a366"/><path d="M24 4h12v8H24z" fill="#33c481"/><path d="M12 20h24v8H12z" fill="#107c41"/><path d="M24 12h12v8H24z" fill="#21a366"/><path d="M12 28h24v8H12z" fill="#185c37"/><rect x="4" y="12" width="16" height="17" fill="#107c41"/>${T(12, 26, 14, "#fff")}X</text>`,
    `<circle cx="21" cy="20" r="17" fill="#d35230"/><path d="M21 3a17 17 0 0 1 17 17H21z" fill="#ff8f6b"/><path d="M21 20h17a17 17 0 0 1-17 17z" fill="#c43e1c"/><rect x="4" y="12" width="16" height="17" fill="#c43e1c"/>${T(12, 26, 14, "#fff")}P</text>`,
    `<rect x="14" y="4" width="22" height="32" rx="2" fill="#ca64ea"/><path d="M26 12h10v8H26z" fill="#ae4bd5"/><path d="M26 20h10v8H26z" fill="#9332bf"/><path d="M26 28h10v8H26z" fill="#7719aa"/><rect x="4" y="12" width="16" height="17" fill="#7719aa"/>${T(12, 26, 14, "#fff")}N</text>`,
    `<rect x="6" y="3" width="28" height="34" fill="#1c4f9a"/><rect x="6" y="3" width="28" height="19" fill="#d8e2f2"/>${T(20, 17, 12, "#1c4f9a")}DEV</text>${T(20, 33, 13, "#3a8cf0")}C++</text>`,
    `<rect x="5" y="1" width="30" height="38" rx="2" fill="#4a4a4a"/><path d="M28 8 12 14v6l16 6v-6L12 14M28 20v6l-16 6v-6" fill="#ff9800" stroke="#ff9800" stroke-width="1"/>`,
    `<path d="M9 2h22c3 0 4 2 4 4v26c0 2-2 3-4 3h-5l-6 4-6-4H9c-2 0-4-1-4-3V6c0-2 1-4 4-4z" fill="#f5a01f"/><ellipse cx="20" cy="18" rx="8" ry="11" fill="none" stroke="#fff" stroke-width="1.800"/>${T(20, 24, 14, "#fff", 'font-weight="400"')}S</text>`,
    `<path d="M29 2 38 6v28l-9 4-16-15-7 5-4-2V14l4-2 7 5z" fill="#0d7fc4"/><path d="M29 2 38 6v28l-9 4z" fill="#22a7f0"/><path d="M29 11 18 20l11 9z" fill="#14101f"/>`,
    `<path d="M28 2 37 7v26l-9 5-16-14-7 5-3-2V13l3-2 7 5z" fill="#7248b9"/><path d="M28 2 37 7v26l-9 5z" fill="#a97ef0"/><path d="M28 11 18 20l10 9zM6 15v10l5-5z" fill="#2c1030"/>`,
    `<defs><linearGradient id="g" x1="0" y1="0" x2="1" y2="1"><stop offset="0" stop-color="#21d789"/><stop offset=".6" stop-color="#fcf84a"/></linearGradient></defs><rect x="4" y="4" width="32" height="32" fill="url(#g)"/><rect x="10" y="10" width="22" height="22" fill="#000"/>${T(20, 22, 12, "#fff")}PC</text><path d="M12 27h8" stroke="#fff" stroke-width="1.600"/>`,
    `<defs><linearGradient id="h" x1="0" y1="0" x2="1" y2="1"><stop offset="0" stop-color="#fe315d"/><stop offset=".6" stop-color="#087cfa"/></linearGradient></defs><rect x="4" y="4" width="32" height="32" fill="url(#h)"/><rect x="10" y="8" width="22" height="24" fill="#000"/>${T(20, 22, 12, "#fff")}IJ</text><path d="M12 27h8" stroke="#fff" stroke-width="1.600"/>`,
    `<rect x="6" y="5" width="28" height="30" rx="4" fill="#001e36" stroke="#31a8ff" stroke-width="2.500"/>${T(20, 27, 17, "#9cd8ff", 'font-weight="400"')}Ps</text>`,
    `<rect x="6" y="5" width="28" height="30" fill="#0e2438" stroke="#a6c8de" stroke-width="2.500"/>${T(20, 27, 17, "#a6c8de", 'font-weight="400"')}Lr</text>`,
    `<rect x="6" y="5" width="28" height="30" fill="#0b1c00" stroke="#6fe400" stroke-width="2.500"/>${T(20, 27, 17, "#6fe400", 'font-weight="400"')}Dw</text>`,
    `<rect x="6" y="6" width="26" height="26" fill="#3a0808" stroke="#d42020" stroke-width="2.500"/><path d="M19 10c2 7-3 14-7 17 4-3 12-7 15-4-3 1-8-5-8-13z" fill="none" stroke="#f0e0e0" stroke-width="1.500"/>`,
    `<path d="M20 6l14-4 5 13-12 5z" fill="#c8a878"/><path d="M20 6l10 6 4-10z" fill="#8a6a40"/><circle cx="17" cy="19" r="12" fill="#d8d8d8" stroke="#888"/>${T(17, 26, 20, "#f6c800", 'stroke="#111" stroke-width=".8"')}I</text><path d="M25 28l8 10" stroke="#444" stroke-width="3"/>`,
    `<ellipse cx="20" cy="14" rx="10" ry="12" fill="#111"/><ellipse cx="20" cy="27" rx="11" ry="12" fill="#111"/><ellipse cx="20" cy="29" rx="7.500" ry="9" fill="#fff"/><ellipse cx="20" cy="15" rx="5" ry="2.500" fill="#f5b800"/><path d="M10 20h20l1 4-5 1v5l-4-6H10z" fill="#e02020"/><ellipse cx="13" cy="38" rx="5" ry="2" fill="#f5a800"/><ellipse cx="27" cy="38" rx="5" ry="2" fill="#f5a800"/><circle cx="17" cy="10" r="1.500" fill="#fff"/><circle cx="23" cy="10" r="1.500" fill="#fff"/>`,
    `<ellipse cx="15" cy="15" rx="13" ry="12" fill="#2dc100"/><path d="M7 24l1 6 6-4z" fill="#2dc100"/><ellipse cx="28" cy="26" rx="10.500" ry="9.500" fill="#f1f1f1"/><path d="M34 33l1 5-6-3z" fill="#f1f1f1"/><circle cx="24" cy="24" r="1.300" fill="#888"/><circle cx="31" cy="24" r="1.300" fill="#888"/>`,
    `<ellipse cx="20" cy="20" rx="15" ry="19" fill="#2f8cdf"/><path d="M9 12c7 2 15 5 20 3-1 6-6 8-8 8l3 3-7 9 1-8-4-1 3-3c-4-1-7-6-8-11z" fill="#eaf4fd"/>`,
    `<path d="M7 6h26v26H7z" fill="#8a9a94"/><path d="M10 9h20v20H10z" fill="#e8d8c0"/><ellipse cx="20" cy="12" rx="4" ry="7" fill="#f6ece0"/><path d="M15 17h10l1 14H14z" fill="#d8681e"/><path d="M3 32h34l-4 6H7z" fill="#62b8a4"/>`,
    `<ellipse cx="20" cy="20" rx="15" ry="19" fill="#f9d908"/><path d="M20 6v20a6 6 0 1 1-4-5.500" fill="none" stroke="#1aa86a" stroke-width="4"/><path d="M20 3l9 5-5 5-4-2z" fill="#1aa86a"/>`,
    `<rect x="3" y="1" width="34" height="38" rx="6" fill="#e20c1c"/><circle cx="20" cy="22" r="9" fill="none" stroke="#fff" stroke-width="3"/><path d="M23 7c-8 2-13 8-11 16" fill="none" stroke="#fff" stroke-width="3"/><circle cx="20" cy="22" r="3" fill="none" stroke="#fff" stroke-width="2"/>`,
];

class PsTaskbar extends HTMLElement {
    constructor() {
        super();
        this.attachShadow({ mode: "open" });
        const app = (svg, i) => {
            let cls = "app";
            if (i === 2) cls += " open";
            if (i === 22) cls += " active";
            // pinned apps after Photoshop sit a little closer together
            const width = i > 22 ? 59 : 59.6;
            return `<div class="${cls}" style="width:${width}px"><svg width="40" height="40" viewBox="0 0 40 40">${svg}</svg></div>`;
        };
        this.shadowRoot.innerHTML = `
            <style>
                :host { display: flex; height: 50px; flex: none; align-items: stretch; color: #fff; background: linear-gradient(90deg, #17132a 0, #20122c 25%, #2c1030 50%, #3d0c30 75%, #4d062e 100%); }
                .sys { width: 60px; flex: none; display: flex; align-items: center; justify-content: center; }
                .apps { display: flex; padding-left: 4px; flex: none; }
                .app { position: relative; display: flex; align-items: center; justify-content: center; flex: none; }
                .app.open::after, .app.active::after { content: ""; position: absolute; left: 5px; right: 5px; bottom: 0; height: 3px; background: #f48ab5; }
                .app.active { background: #5c3a55; }
                .app.active::after { left: 0; right: 0; }
                .tray { display: flex; align-items: center; flex: none; margin-left: 8px; }
                .tray svg { display: block; flex: none; }
                .clock { width: 110px; flex: none; margin-left: 3px; text-align: center; font-size: 15px; line-height: 24px; }
                .zh { width: 22px; text-align: center; font-size: 16px; margin-left: 6px; flex: none; }
            </style>
            <div class="sys"><svg width="24" height="24" viewBox="0 0 24 24" fill="#fff"><path d="M2 4l8.500-1.500v9H2zM11.500 2.300 22 1v10.500H11.500zM2 12.500h8.500v9L2 20zM11.500 12.500H22V23l-10.500-1.500z"/></svg></div>
            <div class="sys"><svg width="26" height="26" viewBox="0 0 24 24" fill="none" stroke="#fff" stroke-width="1.300"><circle cx="14.500" cy="9" r="6.500"/><path d="M10 14 3 22"/></svg></div>
            <div class="sys"><svg width="24" height="24" viewBox="0 0 24 24" fill="none" stroke="#fff" stroke-width="2.800"><circle cx="12" cy="12" r="9"/></svg></div>
            <div class="apps">${APPS.map(app).join("")}</div>
            <div class="tray">
                <svg width="18" height="12" viewBox="0 0 18 12" fill="none" stroke="#fff" stroke-width="1.200"><path d="M1 11l8-9 8 9"/></svg>
                <svg width="24" height="24" viewBox="0 0 40 40" style="margin-left:8px"><ellipse cx="16" cy="16" rx="13" ry="13" fill="#2dc100"/><ellipse cx="28" cy="27" rx="11" ry="10" fill="#eee"/></svg>
                <svg width="24" height="30" viewBox="0 0 24 30" style="margin-left:8px"><ellipse cx="12" cy="15" rx="10" ry="14" fill="#c8b8a8"/><ellipse cx="11" cy="9" rx="9" ry="7" fill="#6a5040"/></svg>
                <svg width="24" height="24" viewBox="0 0 24 24" fill="none" stroke="#fff" stroke-width="1.200" style="margin-left:7px"><path d="M5 2v6M3 8h4v4H3zM8 7h13v13H8z"/><rect x="10" y="9" width="9" height="9" fill="#fff"/></svg>
                <svg width="24" height="24" viewBox="0 0 24 24" fill="none" stroke="#fff" stroke-width="1.200" style="margin-left:5px"><path d="M6 3h15v14H6zM2 3h6v6H2zM4 5h2M13 17v5M8 22h10"/></svg>
                <svg width="24" height="24" viewBox="0 0 24 24" fill="none" stroke="#fff" stroke-width="1.200" style="margin-left:6px"><path d="M2 9h4l6-5v16l-6-5H2zM15 8c1 2 1 6 0 8M18 6c2 3 2 9 0 12"/></svg>
                <span class="zh">中</span>
                <svg width="22" height="26" viewBox="0 0 22 26" style="margin-left:14px"><path d="M4 4c5-3 12-3 16 0l-2 18c-5 3-12 3-16 0z" fill="#ef5a24"/><path d="M15 8c-3-1-6 0-6 3s6 2 6 5-4 3-7 2" fill="none" stroke="#fff" stroke-width="2.600"/></svg>
                <div class="clock"><div>22:20</div><div>2020/11/23</div></div>
                <svg width="22" height="26" viewBox="0 0 22 26" fill="none" stroke="#fff" stroke-width="1.400" style="margin-left:6px"><path d="M2 2h18v19h-6l-3 3-3-3H2z"/></svg>
            </div>`;
    }
}

class PsApp extends HTMLElement {
    constructor() {
        super();
        this.attachShadow({ mode: "open" });
        this.shadowRoot.innerHTML = `
            <style>
                :host { display: flex; flex-direction: column; width: 2560px; height: 1440px; overflow: hidden; font-family: "Open Sans", "Noto Sans CJK SC", sans-serif; }
                .work { flex: 1; display: flex; min-height: 0; box-sizing: border-box; }
                .panels { flex: 1; display: flex; flex-direction: column; min-width: 0; background: #282828; }
                .ptop { height: 15px; flex: none; background: #262626; display: flex; justify-content: flex-end; align-items: center; padding-right: 9px; }
            </style>
            <ps-menubar></ps-menubar>
            <ps-options></ps-options>
            <div class="work">
                <ps-toolbar></ps-toolbar>
                <ps-document></ps-document>
                <ps-scroll></ps-scroll>
                <ps-dock></ps-dock>
                <div class="panels">
                    <div class="ptop"><ps-icon name="chevR" size="11" color="#aaa"></ps-icon></div>
                    <ps-color-panel></ps-color-panel>
                    <ps-layers-panel></ps-layers-panel>
                </div>
            </div>
            <ps-taskbar></ps-taskbar>`;
    }
}

customElements.define("ps-icon", PsIcon);
customElements.define("ps-panel-tabs", PsPanelTabs);
customElements.define("ps-ruler", PsRuler);
customElements.define("ps-menubar", PsMenubar);
customElements.define("ps-options", PsOptions);
customElements.define("ps-toolbar", PsToolbar);
customElements.define("ps-document", PsDocument);
customElements.define("ps-scroll", PsScroll);
customElements.define("ps-dock", PsDock);
customElements.define("ps-color-panel", PsColorPanel);
customElements.define("ps-layers-panel", PsLayersPanel);
customElements.define("ps-taskbar", PsTaskbar);
customElements.define("ps-app", PsApp);
</script>
</body>
</html>
